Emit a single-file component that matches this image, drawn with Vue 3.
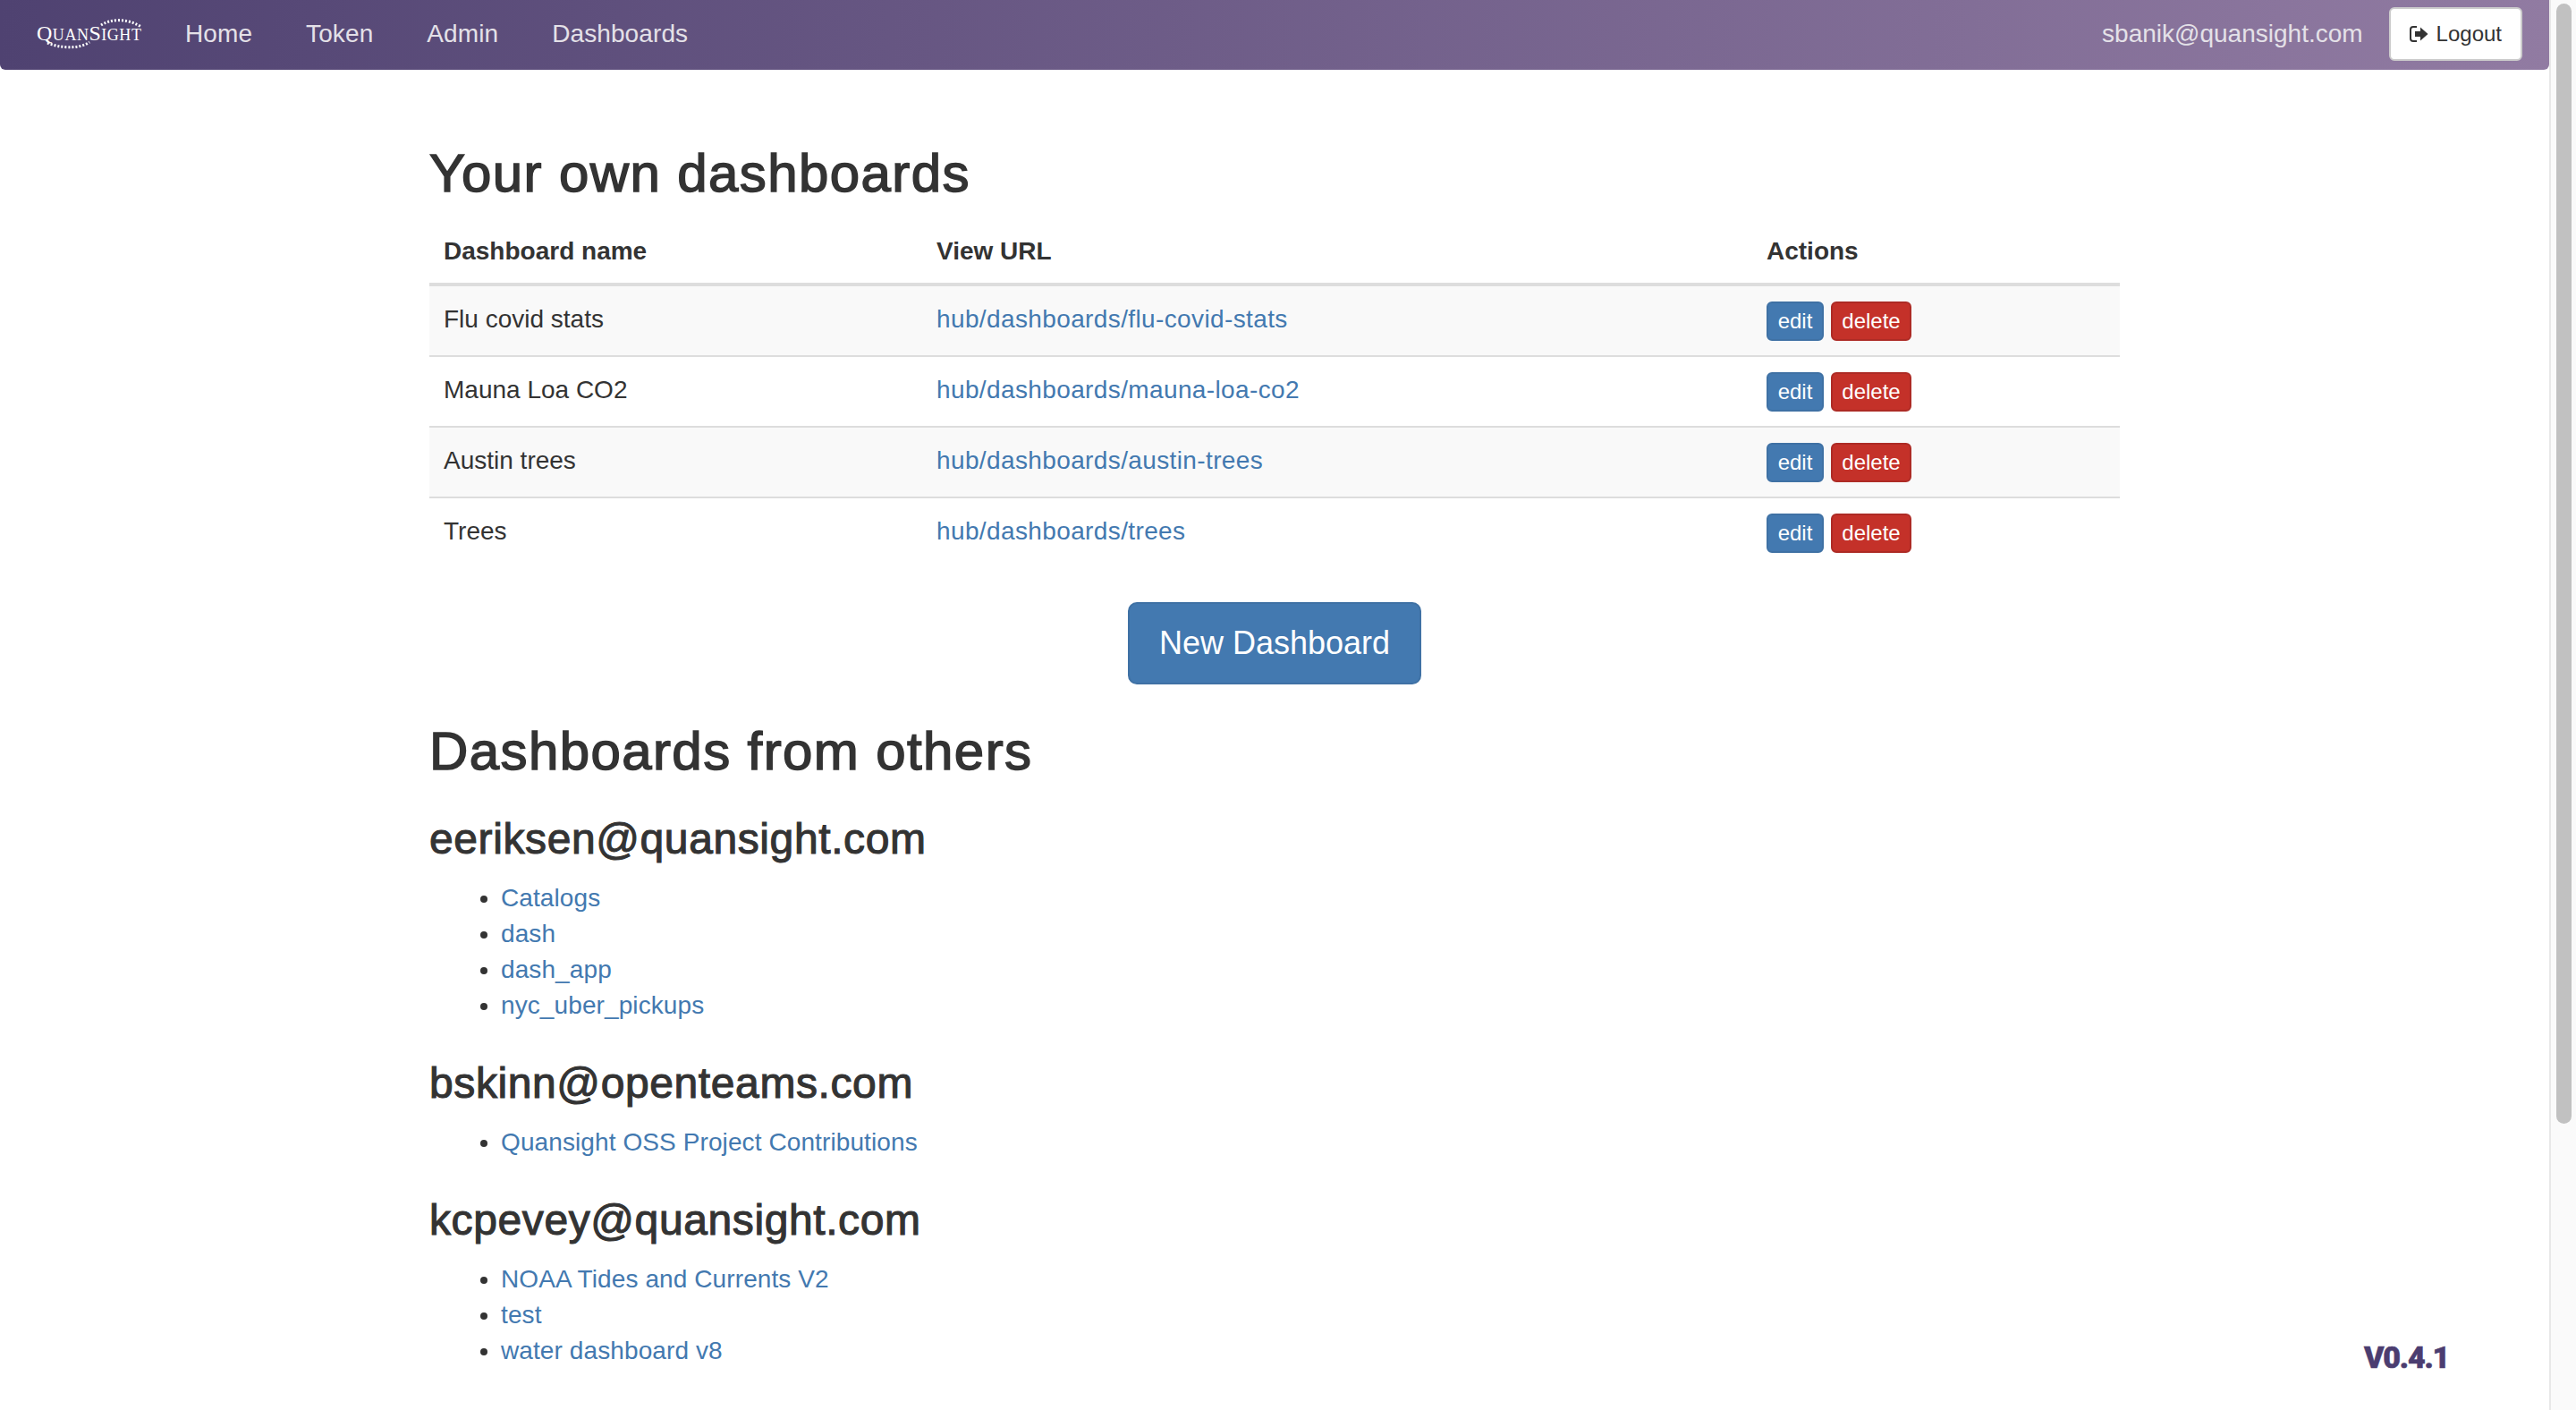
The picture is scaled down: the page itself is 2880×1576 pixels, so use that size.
<script setup>
const navLinks = ['Home', 'Token', 'Admin', 'Dashboards']

const ownDashboards = [
  { name: 'Flu covid stats', url: 'hub/dashboards/flu-covid-stats' },
  { name: 'Mauna Loa CO2', url: 'hub/dashboards/mauna-loa-co2' },
  { name: 'Austin trees', url: 'hub/dashboards/austin-trees' },
  { name: 'Trees', url: 'hub/dashboards/trees' }
]

const others = [
  { user: 'eeriksen@quansight.com', items: ['Catalogs', 'dash', 'dash_app', 'nyc_uber_pickups'] },
  { user: 'bskinn@openteams.com', items: ['Quansight OSS Project Contributions'] },
  { user: 'kcpevey@quansight.com', items: ['NOAA Tides and Currents V2', 'test', 'water dashboard v8'] }
]
</script>

<template>
  <div class="window">
    <div class="page">
      <nav class="navbar">
        <a class="brand" href="#">
          <svg class="logo" width="177" height="76" viewBox="0 0 177 76">
            <path class="logo-dots" d="M113 28 C122 22 140 19 158 30" />
            <path class="logo-dots" d="M53 48 C64 53 88 56 100 47" />
            <text x="41" y="45" textLength="117" lengthAdjust="spacing" class="logo-text"><tspan class="logo-cap">Q</tspan>UAN<tspan class="logo-cap">S</tspan>IGHT</text>
          </svg>
        </a>
        <a v-for="link in navLinks" :key="link" class="nav-link" href="#">{{ link }}</a>
        <span class="nav-user">sbanik@quansight.com</span>
        <button class="logout">
          <svg class="logout-icon" width="21" height="20" viewBox="0 0 21 20">
            <path d="M8 2H4a3 3 0 0 0-3 3v10a3 3 0 0 0 3 3h4" fill="none" stroke="#333" stroke-width="2" />
            <path d="M6 7h6V2.500L20.500 10 12 17.500V13H6z" fill="#333" />
          </svg>
          Logout
        </button>
      </nav>

      <main class="container">
        <h1 class="own-title">Your own dashboards</h1>
        <table class="own-table">
          <colgroup>
            <col class="col-name" />
            <col class="col-url" />
            <col />
          </colgroup>
          <thead>
            <tr>
              <th>Dashboard name</th>
              <th>View URL</th>
              <th>Actions</th>
            </tr>
          </thead>
          <tbody>
            <tr v-for="d in ownDashboards" :key="d.url">
              <td>{{ d.name }}</td>
              <td><a class="view-link" href="#">{{ d.url }}</a></td>
              <td class="actions">
                <button class="btn-xs btn-edit">edit</button>
                <button class="btn-xs btn-delete">delete</button>
              </td>
            </tr>
          </tbody>
        </table>

        <div class="new-row">
          <button class="btn-new">New Dashboard</button>
        </div>

        <h1 class="others-title">Dashboards from others</h1>
        <template v-for="o in others" :key="o.user">
          <h3>{{ o.user }}</h3>
          <ul>
            <li v-for="item in o.items" :key="item"><a href="#">{{ item }}</a></li>
          </ul>
        </template>
      </main>

      <div class="version">V0.4.1</div>
    </div>

    <div class="scrollbar">
      <div class="thumb"></div>
    </div>
  </div>
</template>

<style scoped>
.window {
  display: flex;
  height: 100vh;
  overflow: hidden;
  background: #fff;
  font-family: "Liberation Sans", Arial, sans-serif;
  font-size: 28px;
  line-height: 40px;
  color: #333;
}

.page {
  position: relative;
  flex: 1;
  min-width: 0;
  overflow: hidden;
}

.navbar {
  display: flex;
  align-items: center;
  box-sizing: border-box;
  height: 78px;
  padding: 0 30px 2px 0;
  background: linear-gradient(92deg, #4f4271 0%, #917ba2 100%);
  border-radius: 0 0 6px 6px;
}

.brand {
  display: block;
}

.logo {
  display: block;
}

.logo-dots {
  fill: none;
  stroke: #fff;
  stroke-width: 3;
  stroke-dasharray: 2 2;
}

.logo-text {
  font-family: "Liberation Serif", serif;
  font-size: 18px;
  fill: #fff;
}

.logo-cap {
  font-size: 24px;
}

.nav-link {
  padding: 0 30px;
  color: #e4e1e8;
  letter-spacing: 0.1px;
  text-decoration: none;
}

.nav-user {
  margin-left: auto;
  margin-right: 29px;
  color: #e4e1e8;
}

.logout {
  display: flex;
  align-items: center;
  gap: 9px;
  height: 60px;
  padding: 0 21px;
  background: #fff;
  border: 2px solid #ccc;
  border-radius: 6px;
  font: inherit;
  font-size: 24px;
  color: #333;
}

.logout-icon {
  flex: none;
}

.container {
  width: 1890px;
  margin: 0 auto;
}

h1 {
  margin: 0;
  font-size: 60px;
  line-height: 73px;
  font-weight: 400;
  letter-spacing: 1.4px;
  -webkit-text-stroke: 1.5px #333;
}

.own-title {
  padding-top: 79px;
  margin-bottom: 14px;
}

.own-table {
  width: 100%;
  border-collapse: collapse;
  table-layout: fixed;
}

.col-name {
  width: 551px;
}

.col-url {
  width: 928px;
}

th {
  padding: 17px 16px 15px;
  text-align: left;
  font-weight: 700;
  border-bottom: 4px solid #ddd;
}

td {
  padding: 17px 16px 15px;
  vertical-align: top;
  border-top: 2px solid #ddd;
}

tbody tr:first-child td {
  border-top: 0;
}

tbody tr:nth-child(odd) {
  background: #f9f9f9;
}

a {
  color: #4379b0;
  letter-spacing: 0.1px;
  text-decoration: none;
}

.view-link {
  letter-spacing: 0.38px;
}

.actions {
  font-size: 16px;
}

.btn-xs {
  height: 44px;
  padding: 0 10px;
  margin: 0 8px 1px 0;
  border: 2px solid;
  border-radius: 6px;
  font: inherit;
  font-size: 24px;
  line-height: 40px;
  color: #fff;
  vertical-align: top;
}

.btn-edit {
  width: 64px;
  background: #4379b0;
  border-color: #3f71a4;
}

.btn-delete {
  width: 90px;
  background: #c43129;
  border-color: #ad2b25;
}

.new-row {
  display: flex;
  justify-content: center;
  margin-top: 39px;
}

.btn-new {
  width: 328px;
  height: 92px;
  background: #4379b0;
  border: 2px solid #3f71a4;
  border-radius: 10px;
  font: inherit;
  font-size: 36px;
  color: #fff;
}

.others-title {
  margin-top: 38px;
  margin-bottom: 35px;
}

h3 {
  margin: 40px 0 20px;
  font-size: 48px;
  line-height: 53px;
  font-weight: 400;
  letter-spacing: 0.6px;
  -webkit-text-stroke: 1.1px #333;
}

.others-title + h3 {
  margin-top: 0;
}

ul {
  margin: 0 0 20px;
  padding-left: 80px;
}

.version {
  position: absolute;
  left: 2643px;
  top: 1497px;
  font-family: Roboto, sans-serif;
  font-size: 34px;
  line-height: 40px;
  font-weight: 900;
  letter-spacing: -1.2px;
  -webkit-text-stroke: 0.6px #4b3d70;
  color: #4b3d70;
}

.scrollbar {
  flex: none;
  width: 30px;
  padding: 4px 5px 0 6px;
  background: #fafafa;
  border-left: 2px solid #e8e8e8;
  box-sizing: border-box;
}

.thumb {
  height: 1252px;
  background: #c1c1c1;
  border-radius: 9px;
}
</style>
